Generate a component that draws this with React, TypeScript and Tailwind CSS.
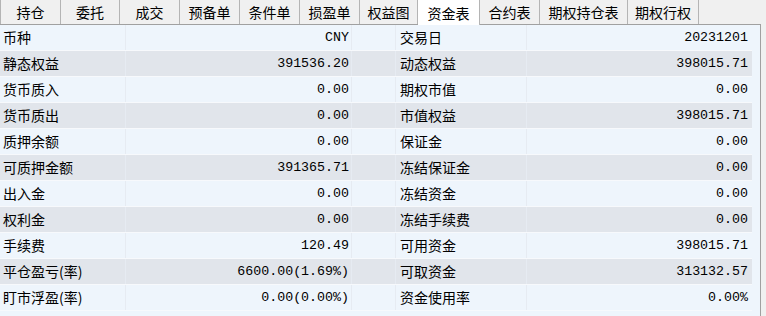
import React from "react";

const tabs: { name: string; w: number; active?: boolean }[] = [
  { name: "持仓", w: 61 },
  { name: "委托", w: 59 },
  { name: "成交", w: 60 },
  { name: "预备单", w: 60 },
  { name: "条件单", w: 60 },
  { name: "损盈单", w: 60 },
  { name: "权益图", w: 58 },
  { name: "资金表", w: 62, active: true },
  { name: "合约表", w: 60 },
  { name: "期权持仓表", w: 88 },
  { name: "期权行权", w: 71 },
];

const rows: [string, string, string, string][] = [
  ["币种", "CNY", "交易日", "20231201"],
  ["静态权益", "391536.20", "动态权益", "398015.71"],
  ["货币质入", "0.00", "期权市值", "0.00"],
  ["货币质出", "0.00", "市值权益", "398015.71"],
  ["质押余额", "0.00", "保证金", "0.00"],
  ["可质押金额", "391365.71", "冻结保证金", "0.00"],
  ["出入金", "0.00", "冻结资金", "0.00"],
  ["权利金", "0.00", "冻结手续费", "0.00"],
  ["手续费", "120.49", "可用资金", "398015.71"],
  ["平仓盈亏(率)", "6600.00(1.69%)", "可取资金", "313132.57"],
  ["盯市浮盈(率)", "0.00(0.00%)", "资金使用率", "0.00%"],
];

const cjk = { fontFamily: '"Noto Sans CJK SC", "Noto Sans", sans-serif' };
const mono = { fontFamily: '"Liberation Mono", "DejaVu Sans Mono", monospace' };

export default function App() {
  return (
    <div className="w-[766px] h-[316px] bg-[#f0f0f0] overflow-hidden text-black" style={cjk}>
      <div className="flex h-6 items-stretch">
        {tabs.map((t, i) => (
          <div
            key={t.name}
            style={{ width: t.w }}
            className={
              "flex items-center justify-center text-[14px] leading-none border-r border-[#b4b4b4] " +
              (i === 0 ? "border-l " : "") +
              (t.active ? "bg-white h-[25px] relative z-10" : "")
            }
          >
            {t.name}
          </div>
        ))}
      </div>
      <div className="w-[761px] h-[292px] border-t border-r border-[#a0a0a0] bg-[#eef5fc]">
        {rows.map((r, i) => (
          <div
            key={r[0]}
            className={
              "flex h-[26px] w-[752px] items-center border-b border-[#f7f9fc] text-[14px] " +
              (i % 2 === 1 ? "bg-[#e1e5eb]" : "bg-[#eef5fc]")
            }
          >
            <div className="w-[126px] h-full flex items-center pl-[3px] border-r border-[#e6ebf2]">{r[0]}</div>
            <div className="w-[226px] h-full flex items-center justify-end pr-[2px] text-[13.3px] border-r border-[#e6ebf2]" style={mono}>
              {r[1]}
            </div>
            <div className="w-[44px] h-full border-r border-[#e6ebf2]" />
            <div className="w-[131px] h-full flex items-center pl-[4px] border-r border-[#e6ebf2]">{r[2]}</div>
            <div className="flex-1 h-full flex items-center justify-end pr-[4px] text-[13.3px]" style={mono}>
              {r[3]}
            </div>
          </div>
        ))}
      </div>
    </div>
  );
}
